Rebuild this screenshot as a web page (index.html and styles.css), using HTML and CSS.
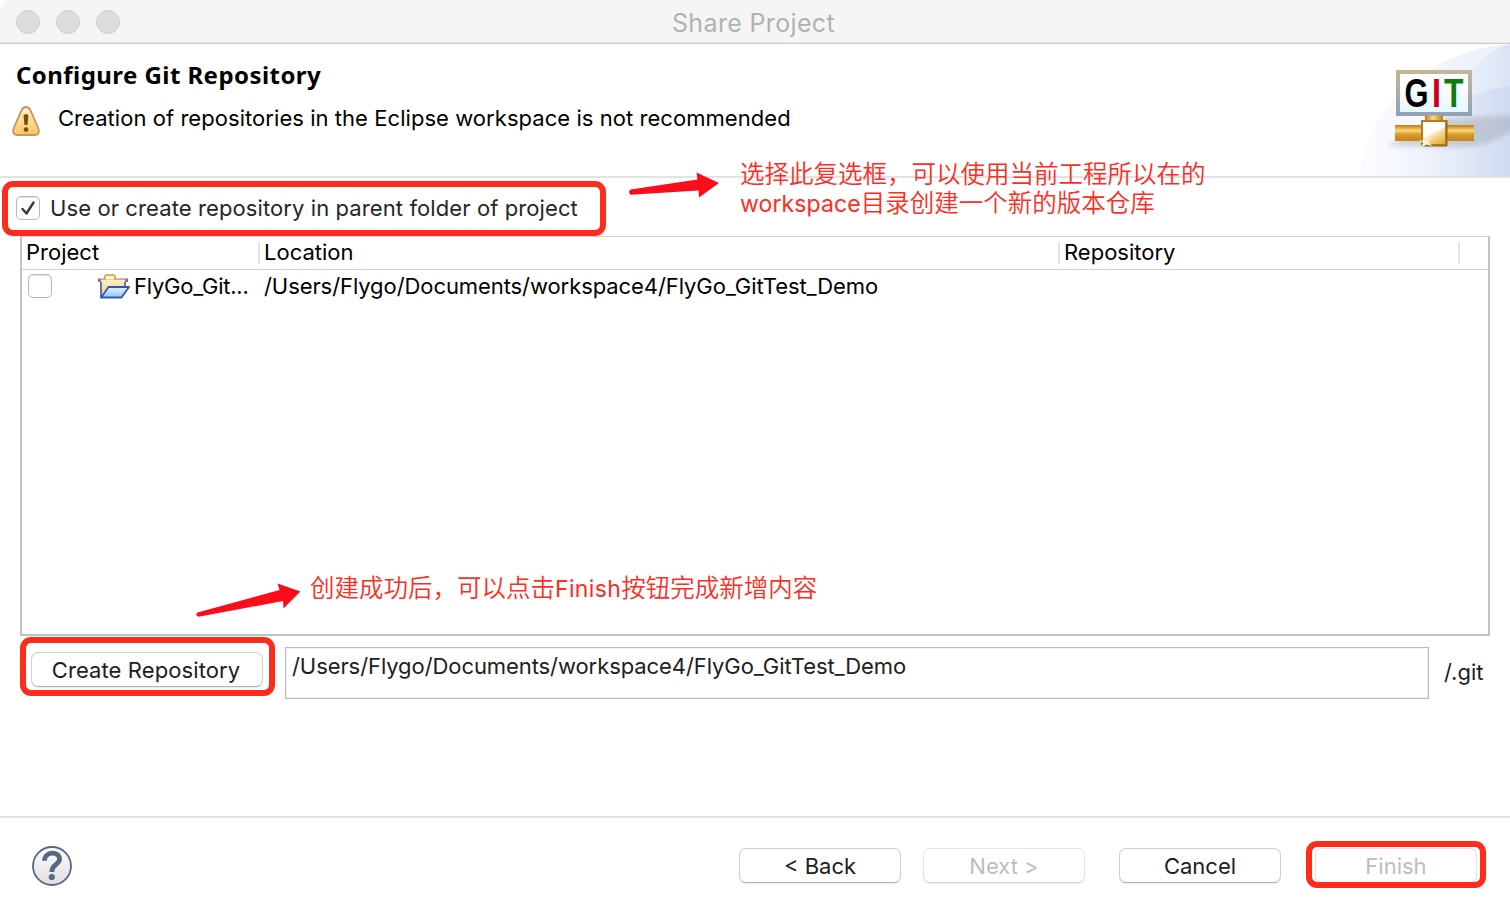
FILE: index.html
```html
<!DOCTYPE html>
<html lang="zh">
  <head>
    <meta charset="UTF-8" />
    <title>Share Project</title>
    <link rel="stylesheet" href="styles.css">
  </head>
  <body>
    <div class="window">
      <div class="titlebar">
        <div class="lights">
          <span class="light"></span>
          <span class="light"></span>
          <span class="light"></span>
        </div>
        <div class="title">Share Project</div>
      </div>

      <div class="header">
        <div class="header-text">
          <h1>Configure Git Repository</h1>
          <div class="message">
            <svg class="warning" width="28" height="30" viewBox="0 0 28 30">
              <defs>
                <linearGradient id="warn" x1="0" y1="0" x2="0" y2="1">
                  <stop offset="0" stop-color="#fff3cf" />
                  <stop offset="1" stop-color="#ffc35c" />
                </linearGradient>
              </defs>
              <path d="M14 1C16 1 17.3 2.2 18.3 4L26 21.5C28 26 26.500 29 23 29H5C1.500 29 0 26 2 21.500L9.700 4C10.700 2.200 12 1 14 1Z" fill="url(#warn)" stroke="#c79560" stroke-width="1.8" />
              <path d="M11.500 9.500Q14 6.500 16.500 9.500L15.500 19H12.500Z" fill="#7a4d14" />
              <circle cx="14" cy="23.600" r="2.400" fill="#7a4d14" />
            </svg>
            <span class="message-text">Creation of repositories in the Eclipse workspace is not recommended</span>
          </div>
        </div>

        <svg class="banner" width="170" height="132" viewBox="0 0 170 132">
          <defs>
            <linearGradient id="sky" x1="0" y1="0" x2="1" y2="0">
              <stop offset="0" stop-color="#fbfcff" />
              <stop offset="0.6" stop-color="#f0f4fc" />
              <stop offset="1" stop-color="#e9effa" />
            </linearGradient>
            <linearGradient id="sky2" x1="0" y1="0" x2="1" y2="0">
              <stop offset="0" stop-color="#e6edf9" stop-opacity="0" />
              <stop offset="1" stop-color="#c3d1ee" />
            </linearGradient>
            <linearGradient id="frame" x1="0" y1="0" x2="0" y2="1">
              <stop offset="0" stop-color="#c2b795" />
              <stop offset="1" stop-color="#93a0b8" />
            </linearGradient>
            <linearGradient id="screen" x1="0" y1="0" x2="0" y2="1">
              <stop offset="0" stop-color="#ffffff" />
              <stop offset="1" stop-color="#e6f7ff" />
            </linearGradient>
            <linearGradient id="pipe" x1="0" y1="0" x2="0" y2="1">
              <stop offset="0" stop-color="#b87c1c" />
              <stop offset="0.12" stop-color="#d79a2c" />
              <stop offset="0.35" stop-color="#fbd978" />
              <stop offset="0.6" stop-color="#d9982a" />
              <stop offset="1" stop-color="#c3841f" />
            </linearGradient>
            <linearGradient id="stem" x1="0" y1="0" x2="1" y2="0">
              <stop offset="0" stop-color="#bb7f1c" />
              <stop offset="0.45" stop-color="#fbd97e" />
              <stop offset="1" stop-color="#bb7f1c" />
            </linearGradient>
            <linearGradient id="node" x1="0.25" y1="0.1" x2="0.75" y2="1">
              <stop offset="0.4" stop-color="#ffffff" />
              <stop offset="0.52" stop-color="#f9e2b0" />
              <stop offset="1" stop-color="#eaa92c" />
            </linearGradient>
            <filter id="soft" x="-20%" y="-30%" width="140%" height="160%">
              <feGaussianBlur stdDeviation="2.5" />
            </filter>
          </defs>
          <path d="M20 132C24 64 90 6 170 0V132Z" fill="url(#sky)" />
          <path d="M80 132C100 62 130 12 170 0V132Z" fill="url(#sky2)" opacity="0.4" />
          <path d="M40 132C70 76 120 48 170 42V132Z" fill="url(#sky2)" opacity="0.5" />
          <path d="M46 102L106 74L175 71V86L148 99Q140 103 120 103Z" fill="#9aa0aa" opacity="0.42" filter="url(#soft)" />
          <rect x="58" y="28" width="72" height="42" fill="url(#screen)" stroke="url(#frame)" stroke-width="4" />
          <g class="git">
            <text x="64.500" y="63" textLength="24" lengthAdjust="spacingAndGlyphs">G</text>
            <text class="red" x="91.900" y="63" textLength="9" lengthAdjust="spacingAndGlyphs">I</text>
            <text class="green" x="104" y="63" textLength="19.500" lengthAdjust="spacingAndGlyphs">T</text>
          </g>
          <rect x="85" y="71.500" width="18" height="6" fill="url(#stem)" />
          <rect x="55" y="81" width="79" height="16" fill="url(#pipe)" />
          <rect x="82" y="77" width="24" height="24" fill="url(#node)" stroke="#b07c1c" stroke-width="2" />
          <path d="M81 102H107V76" fill="none" stroke="#8a6216" stroke-width="1" />
          <path d="M85 92L86.500 97L92 93L88 98.500L93 102L86.500 100.500L80 104L83.500 99L79 96L84.500 97Z" fill="#fff6dc" />
        </svg>
      </div>

      <div class="content">
        <div class="check-row">
          <div class="check-wrap highlight">
            <span class="checkbox">
              <svg width="24" height="24" viewBox="0 0 24 24">
                <path d="M6.500 13L10.500 17.500L17.500 6.500" fill="none" stroke="#3c3c3c" stroke-width="2.500" stroke-linecap="round" stroke-linejoin="round" />
              </svg>
            </span>
            <span class="check-label">Use or create repository in parent folder of project</span>
          </div>
        </div>

        <div class="table">
          <div class="row table-head">
            <div class="cell project">Project</div>
            <div class="cell location">Location</div>
            <div class="cell repository">Repository</div>
          </div>
          <div class="row table-row">
            <div class="cell project">
              <span class="checkbox"></span>
              <svg class="folder" width="32" height="25" viewBox="0 0 32 25">
                <defs>
                  <linearGradient id="folder-back" x1="0" y1="0" x2="0" y2="1">
                    <stop offset="0" stop-color="#fdeec0" />
                    <stop offset="1" stop-color="#f5d48a" />
                  </linearGradient>
                  <linearGradient id="folder-front" x1="0" y1="0" x2="0" y2="1">
                    <stop offset="0" stop-color="#e0f3ff" />
                    <stop offset="1" stop-color="#8cc8f2" />
                  </linearGradient>
                </defs>
                <path d="M0 4.500H30V8H0Z" fill="#8d7480" />
                <path d="M3 5.500H27V14H9L3 21Z" fill="url(#folder-back)" />
                <path d="M7 5.500V2.500Q7 1 8.500 1H15.500Q17 1 17 2.500V5.500" fill="#fff3d0" stroke="#cf9c48" stroke-width="1.600" />
                <path d="M3 8V23M27 8V13" stroke="#5566a8" stroke-width="1.800" />
                <path d="M10.500 13H31L23.500 23.500H3Z" fill="url(#folder-front)" stroke="#3455b4" stroke-width="1.800" stroke-linejoin="round" />
              </svg>
              <span class="project-name">FlyGo_Git...</span>
            </div>
            <div class="cell location path">/Users/Flygo/Documents/workspace4/FlyGo_GitTest_Demo</div>
            <div class="cell repository"></div>
          </div>
        </div>

        <div class="create-row">
          <div class="create-wrap highlight">
            <button class="btn create">Create Repository</button>
          </div>
          <div class="input path">/Users/Flygo/Documents/workspace4/FlyGo_GitTest_Demo</div>
          <span class="suffix">/.git</span>
        </div>
      </div>

      <div class="footer">
        <svg class="help" width="40" height="40" viewBox="0 0 40 40">
          <defs>
            <linearGradient id="help-bg" x1="0" y1="0" x2="0" y2="1">
              <stop offset="0" stop-color="#ffffff" />
              <stop offset="1" stop-color="#dedede" />
            </linearGradient>
          </defs>
          <circle cx="20" cy="20" r="19" fill="url(#help-bg)" stroke="#566885" stroke-width="1.800" />
          <path d="M12.500 14.800C12.500 5 27.500 5 27.500 13C27.500 19 19.800 18 19.800 26" fill="none" stroke="#566885" stroke-width="4.800" />
          <circle cx="19.800" cy="31" r="3.100" fill="#566885" />
        </svg>
        <div class="buttons">
          <button class="btn">&lt; Back</button>
          <button class="btn next" disabled>Next &gt;</button>
          <button class="btn cancel">Cancel</button>
          <div class="finish-wrap highlight">
            <button class="btn" disabled>Finish</button>
          </div>
        </div>
      </div>

      <div class="note note-top">
        <svg width="92" height="28" viewBox="0 0 92 28">
          <path d="M2.500 18.500L69.500 8.500L68.500 1.500L91 12L71 26.500L70.500 19.500L2.500 23.800Q-0.500 21 2.500 18.500Z" fill="#fc0d1b" />
        </svg>
        <p>选择此复选框，可以使用当前工程所以在的<br><span class="latin">workspace</span>目录创建一个新的版本仓库</p>
      </div>

      <div class="note note-bottom">
        <svg width="106" height="36" viewBox="0 0 106 36">
          <path d="M1.500 30.500L83.500 8L81.500 1.500L104.500 9.500L87.500 26.500L87 19L2.500 34.700Q-1.500 33 1.500 30.500Z" fill="#fc0d1b" />
        </svg>
        <p>创建成功后，可以点击<span class="latin">Finish</span>按钮完成新增内容</p>
      </div>
    </div>
  </body>
</html>
```

FILE: styles.css
```css
* {
  box-sizing: border-box;
}

html,
body {
  margin: 0;
  padding: 0;
}

body {
  font-family: Inter, "Noto Sans CJK SC", sans-serif;
  font-size: 22px;
  line-height: 26px;
  color: #000;
  background: #fff;
}

.window {
  position: relative;
  display: flex;
  flex-direction: column;
  width: 1510px;
  height: 918px;
  overflow: hidden;
  background: #fff;
}

/* title bar */
.titlebar {
  display: flex;
  align-items: center;
  height: 44px;
  padding-left: 16px;
  background: #f5f5f5;
  border-bottom: 1px solid #cbcbcb;
  box-shadow: inset 0 -1px #e8e8e8;
  border-radius: 10px 0 0 0;
}

.lights {
  display: flex;
  gap: 16px;
}

.light {
  width: 24px;
  height: 24px;
  border: 1px solid #cfcfcf;
  border-radius: 50%;
  background: #dcdcdc;
}

.title {
  flex: 1;
  padding: 3px 123px 0 0;
  text-align: center;
  font-size: 25px;
  letter-spacing: 0.35px;
  color: #b2b2b2;
}

/* wizard header */
.header {
  display: flex;
  justify-content: space-between;
  height: 134px;
  border-bottom: 2px solid #e3e3e3;
}

.header-text {
  padding: 15px 0 0 12px;
}

h1 {
  margin: 0 0 0 4px;
  font-family: "Noto Sans", sans-serif;
  font-size: 24px;
  line-height: 32px;
  font-weight: bold;
  letter-spacing: 0.44px;
}

.message {
  display: flex;
  gap: 18px;
  margin-top: 14px;
}

.warning {
  margin-top: 1px;
}

.message-text {
  letter-spacing: 0.05px;
}

.banner {
  display: block;
}

.git {
  font-family: "Liberation Sans", sans-serif;
  font-size: 40px;
  font-weight: bold;
}

.git .red {
  fill: #c8001a;
}

.git .green {
  fill: #107c10;
}

/* content */
.content {
  flex: 1;
  padding: 0 20px;
}

.check-row {
  height: 58px;
  padding-top: 17px;
}

.check-wrap {
  display: flex;
  align-items: center;
  gap: 10px;
  width: 587px;
  height: 26px;
  margin-left: -4px;
}

.check-label {
  color: #262626;
  letter-spacing: 0.1px;
}

.checkbox {
  display: block;
  flex: none;
  width: 24px;
  height: 24px;
  border: 1px solid #b9b9b9;
  border-radius: 5px;
  background: #fff;
  box-shadow: inset 0 1px 1px #e4e4e4;
}

.checkbox svg {
  display: block;
  margin: -1px;
}

.highlight {
  position: relative;
}

.highlight::after {
  content: "";
  position: absolute;
  border: 6px solid #ff2c1c;
  border-radius: 11px;
}

.check-wrap::after {
  inset: -14px -3px -15px -14px;
}

.table {
  height: 400px;
  border: 2px solid #c2c2c2;
  border-top: 1px solid #d2d2d2;
}

.row {
  display: flex;
}

.cell {
  display: flex;
  align-items: center;
  padding-left: 4px;
  white-space: nowrap;
}

.project {
  width: 238px;
}

.location {
  width: 800px;
}

.repository {
  width: 400px;
}

.table-head {
  padding: 5px 0;
  border-bottom: 1px solid #d2d2d2;
}

.table-head .cell {
  height: 22px;
  padding-bottom: 2px;
  border-right: 2px solid #e4e4e4;
}

.table-row .cell {
  height: 32px;
}

.table-row .project {
  padding-left: 6px;
}

.folder {
  margin: 0 4px 0 46px;
}

.project-name {
  letter-spacing: -0.25px;
}

.path {
  letter-spacing: -0.08px;
}

.create-row {
  display: flex;
  align-items: flex-start;
  padding-top: 11px;
}

.create-wrap {
  width: 234px;
  margin: 5px 0 0 10px;
}

.create-wrap::after {
  inset: -15px -11px -9px -10px;
}

.btn {
  display: block;
  width: 162px;
  height: 35px;
  padding: 0;
  font: inherit;
  color: #202020;
  text-align: center;
  background: #fff;
  border: 1px solid #cfcfcf;
  border-bottom-color: #b4b4b4;
  border-radius: 7px;
  box-shadow: 0 1px 1px rgba(0, 0, 0, 0.08);
}

.btn:disabled {
  color: #bdbdbd;
  border-color: #e3e3e3;
  border-bottom-color: #d6d6d6;
}

.create {
  width: 232px;
  margin-left: 1px;
  padding-right: 2px;
  letter-spacing: 0.1px;
}

.input {
  width: 1144px;
  height: 52px;
  margin-left: 21px;
  padding: 5px 6px;
  border: 1px solid #bcbcbc;
  box-shadow: inset 0 0 0 1px #f1f1f1;
  color: #202020;
}

.suffix {
  margin: 12px 0 0 15px;
  color: #202020;
}

/* footer */
.footer {
  display: flex;
  justify-content: space-between;
  height: 102px;
  padding: 28px 33px 0 32px;
  border-top: 2px solid #e3e3e3;
}

.buttons {
  display: flex;
  padding-top: 2px;
}

.next {
  margin-left: 22px;
}

.cancel {
  margin-left: 34px;
}

.finish-wrap {
  height: 35px;
  margin-left: 34px;
}

.finish-wrap::after {
  inset: -7px -9px -5px -9px;
}

/* red notes drawn over the dialog */
.note {
  position: absolute;
  display: flex;
  color: #ff2d1f;
}

.note p {
  margin: 0;
  font-size: 24.5px;
  line-height: 29px;
  font-weight: 350;
  white-space: nowrap;
}

.note .latin {
  font-size: 23px;
  font-weight: 400;
}

.note-top {
  top: 160px;
  left: 628px;
  gap: 20px;
}

.note-top .latin {
  letter-spacing: 0.1px;
}

.note-top svg {
  margin-top: 11px;
}

.note-bottom {
  top: 574px;
  left: 196px;
  gap: 8px;
}

.note-bottom .latin {
  letter-spacing: 0.35px;
}

.note-bottom svg {
  margin-top: 8px;
}
```
